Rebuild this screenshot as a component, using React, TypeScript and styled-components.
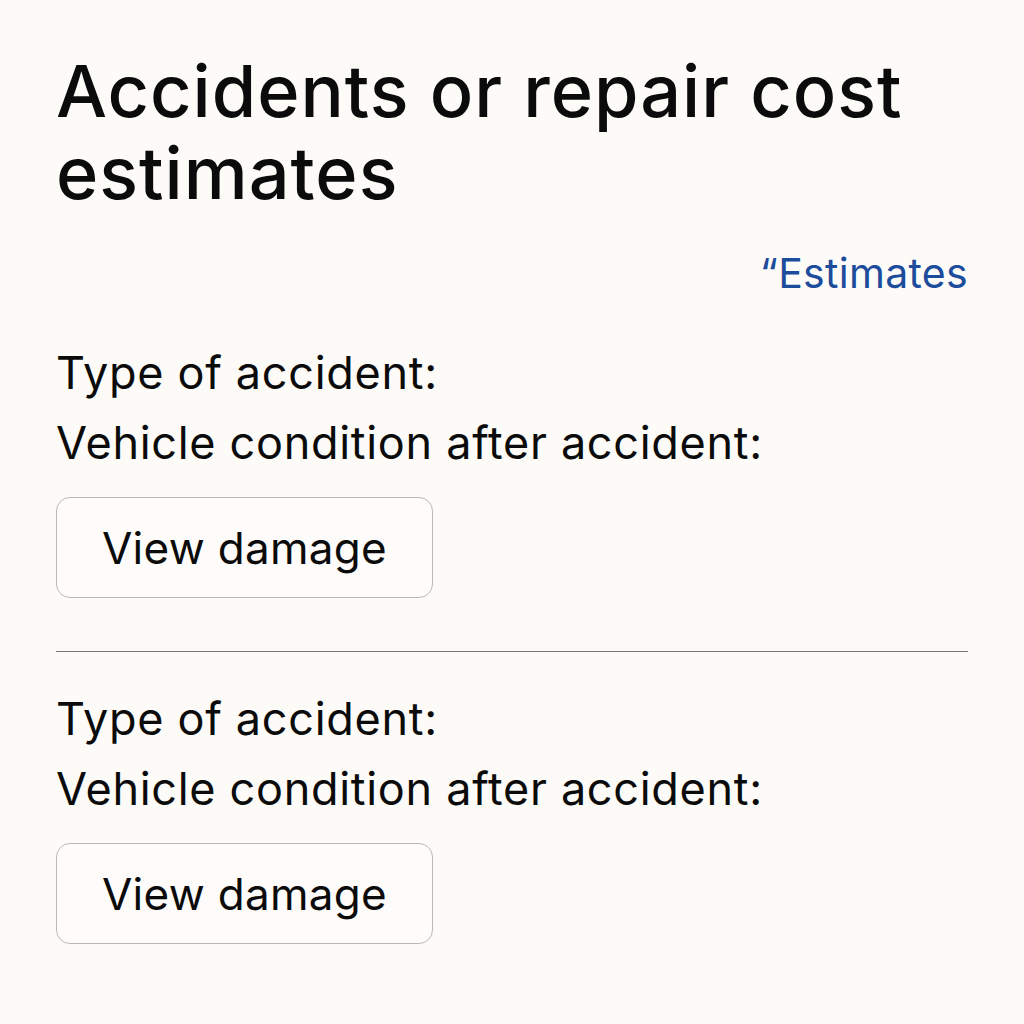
import React from 'react';
import styled, { createGlobalStyle } from 'styled-components';

const GlobalStyle = createGlobalStyle`
	html, body {
		margin: 0;
		padding: 0;
		background: #fcfbf8;
	}
	body {
		font-family: Inter, "Open Sans", "Liberation Sans", sans-serif;
		color: #0b0b0b;
	}
`;

const Page = styled.div`
	width: 1024px;
	height: 1024px;
	box-sizing: border-box;
	padding: 50px 56px 0 56px;
	display: flex;
	flex-direction: column;
`;

const Title = styled.h1`
	margin: 0;
	font-size: 72px;
	font-weight: 500;
	line-height: 82px;
	letter-spacing: 1px;
`;

const LinkRow = styled.div`
	display: flex;
	justify-content: flex-end;
	margin-top: 37px;
`;

const EstimatesLink = styled.a`
	font-size: 41px;
	color: #1d4c9c;
	text-decoration: none;
	line-height: 44px;
	letter-spacing: 0.3px;
`;

const Section = styled.section<{ offset?: number }>`
	display: flex;
	flex-direction: column;
	align-items: flex-start;
	margin-top: ${props => props.offset ?? 0}px;
`;

const Label = styled.div`
	font-size: 45px;
	line-height: 70px;
	letter-spacing: 0.7px;
	white-space: nowrap;
`;

const ActionButton = styled.button`
	margin-top: 19px;
	width: 377px;
	height: 101px;
	box-sizing: border-box;
	background: #fdfcfa;
	border: 1px solid #b9b9b9;
	border-radius: 14px;
	font-family: inherit;
	font-size: 44px;
	letter-spacing: 0.3px;
	color: #0b0b0b;
	cursor: pointer;
`;

const Divider = styled.hr`
	width: 100%;
	margin: 53px 0 32px 0;
	border: none;
	border-top: 1.5px solid #777;
`;

interface AccidentProps {
	offset?: number;
	onView?: () => void;
}

function AccidentEntry(props: AccidentProps): JSX.Element {
	return (
		<Section offset={props.offset}>
			<Label>Type of accident:</Label>
			<Label>Vehicle condition after accident:</Label>
			<ActionButton onClick={props.onView}>View damage</ActionButton>
		</Section>
	);
}

function App(): JSX.Element {
	return (
		<>
			<GlobalStyle />
			<Page>
				<Title>Accidents or repair cost estimates</Title>
				<LinkRow>
					<EstimatesLink href="#">“Estimates</EstimatesLink>
				</LinkRow>
				<AccidentEntry offset={43} />
				<Divider />
				<AccidentEntry />
			</Page>
		</>
	);
}

export default App;
